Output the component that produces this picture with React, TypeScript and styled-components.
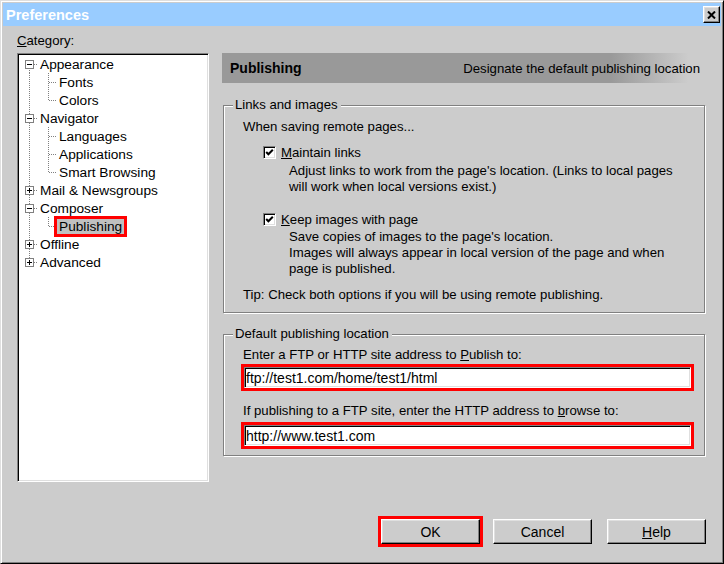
import React from "react";
import styled, { createGlobalStyle, css } from "styled-components";

const GlobalStyle = createGlobalStyle`
  html, body {
    margin: 0;
    padding: 0;
    background: #cccccc;
  }
  body {
    font-family: "Liberation Sans", Arial, sans-serif;
    font-size: 13.2px;
    color: #000;
  }
  * {
    box-sizing: border-box;
  }
`;

// 3D edges, classic style
const raised = css`
  border: 1px solid;
  border-color: #ffffff #000000 #000000 #ffffff;
  box-shadow: inset -1px -1px 0 #808080, inset 1px 1px 0 #dfdfdf;
`;

const sunken = css`
  border: 1px solid;
  border-color: #808080 #ffffff #ffffff #808080;
  box-shadow: inset 1px 1px 0 #000000, inset -1px -1px 0 #dfdfdf;
`;

const Window = styled.div`
  width: 724px;
  height: 564px;
  display: flex;
  flex-direction: column;
  background: #cccccc;
  border: 1px solid;
  border-color: #dfdfdf #000000 #000000 #dfdfdf;
  box-shadow: inset 1px 1px 0 #ffffff, inset -1px -1px 0 #808080;
  padding: 2px;
`;

const TitleBar = styled.div`
  height: 23px;
  display: flex;
  align-items: center;
  justify-content: space-between;
  padding: 0 1px 0 3px;
  background: #99ccff;
`;

const Title = styled.span`
  color: #ffffff;
  font-weight: bold;
  font-size: 14.5px;
`;

const CloseButton = styled.button`
  ${raised};
  width: 17px;
  height: 17px;
  padding: 0;
  background: #cccccc;
  display: flex;
  align-items: center;
  justify-content: center;
`;

const Body = styled.div`
  display: grid;
  grid-template-columns: 192px 486px;
  grid-template-rows: 16px 429px;
  column-gap: 13px;
  row-gap: 4px;
  padding: 7px 0 0 14px;
`;

const Label = styled.div`
  line-height: 16px;
  white-space: nowrap;
`;

const TreeBox = styled.div`
  ${sunken};
  background: #ffffff;
  padding: 1px 0 0 1px;
  grid-row: 2;
`;

const TreeRow = styled.div`
  height: 18px;
  display: flex;
  align-items: stretch;
  font-size: 13.7px;
`;

type Vert = "full" | "top" | "bottom" | "none";

const dotV = (x: number, v: Vert) => {
  if (v === "none") return "";
  const y = v === "bottom" ? 9 : 0;
  const h = v === "full" ? 18 : 9;
  return `repeating-linear-gradient(to bottom, #808080 0 1px, transparent 1px 2px) ${x}px ${y}px / 1px ${h}px no-repeat`;
};

const dotH = (x: number, w: number) =>
  `repeating-linear-gradient(to right, #808080 0 1px, transparent 1px 2px) ${x}px 9px / ${w}px 1px no-repeat`;

const Guide = styled.span<{ $x: number; $v: Vert; $stub?: [number, number] }>`
  width: 19px;
  flex: none;
  display: flex;
  align-items: flex-start;
  background: ${(p) =>
    [dotV(p.$x, p.$v), p.$stub ? dotH(p.$stub[0], p.$stub[1]) : ""]
      .filter(Boolean)
      .join(", ") || "none"};
`;

const Expander = styled.span<{ $open: boolean }>`
  width: 9px;
  height: 9px;
  margin: 5px 0 0 6px;
  border: 1px solid #808080;
  background: ${(p) =>
    p.$open
      ? "linear-gradient(#000, #000) 1px 3px / 5px 1px no-repeat, #ffffff"
      : "linear-gradient(#000, #000) 1px 3px / 5px 1px no-repeat, linear-gradient(#000, #000) 3px 1px / 1px 5px no-repeat, #ffffff"};
`;

const TreeLabel = styled.span<{ $selected?: boolean }>`
  align-self: center;
  line-height: 15px;
  padding: 0 2px;
  white-space: nowrap;
  ${(p) =>
    p.$selected &&
    css`
      background: #c0c0c0;
      outline: 3px solid #ff0000;
    `}
`;

const Panel = styled.div`
  grid-column: 2;
  grid-row: 2;
  display: flex;
  flex-direction: column;
`;

const Header = styled.div`
  height: 30px;
  display: flex;
  align-items: center;
  justify-content: space-between;
  padding: 0 8px;
  background: linear-gradient(to right, #999999 0%, #999999 80%, #cccccc 96%);
`;

const HeaderTitle = styled.span`
  font-weight: bold;
  font-size: 14px;
`;

const Group = styled.div<{ $top: number; $bottom: number }>`
  margin: ${(p) => p.$top}px 3px 0 1px;
  border: 1px solid #808080;
  box-shadow: 1px 1px 0 #ffffff, inset 1px 1px 0 #ffffff;
  padding: 0 10px ${(p) => p.$bottom}px 19px;
  display: flex;
  flex-direction: column;
`;

const GroupTitle = styled.div`
  align-self: flex-start;
  margin: -9px 0 0 -10px;
  padding: 0 3px 0 2px;
  line-height: 16px;
  background: #cccccc;
`;

const Line = styled.div<{ $top?: number; $indent?: number }>`
  margin-top: ${(p) => p.$top ?? 0}px;
  padding-left: ${(p) => p.$indent ?? 0}px;
  line-height: 16px;
  white-space: nowrap;
`;

const CheckRow = styled.label<{ $top: number }>`
  margin-top: ${(p) => p.$top}px;
  padding-left: 20px;
  height: 16px;
  display: flex;
  align-items: center;
  gap: 5px;
`;

const CheckBox = styled.span`
  ${sunken};
  width: 13px;
  height: 13px;
  background: #ffffff;
  display: flex;
  align-items: center;
  justify-content: center;
`;

const Field = styled.input<{ $top: number }>`
  ${sunken};
  margin: ${(p) => p.$top}px 0 0 1px;
  width: 447px;
  height: 21px;
  padding: 0 1px;
  font: inherit;
  font-size: 14px;
  color: #000;
  background: #ffffff;
  outline: 3px solid #ff0000;
`;

const Footer = styled.div`
  margin-top: 37px;
  display: flex;
  justify-content: flex-end;
  padding-right: 15px;
`;

const Button = styled.button<{ $marked?: boolean; $gap?: number }>`
  ${raised};
  width: 99px;
  height: 25px;
  margin-right: ${(p) => p.$gap ?? 0}px;
  padding: 0;
  background: #cccccc;
  color: #000;
  font: inherit;
  font-size: 14px;
  ${(p) =>
    p.$marked &&
    css`
      outline: 3px solid #ff0000;
    `}
`;

type Node = { label: string; open: boolean; children?: string[] };

const tree: Node[] = [
  { label: "Appearance", open: true, children: ["Fonts", "Colors"] },
  { label: "Navigator", open: true, children: ["Languages", "Applications", "Smart Browsing"] },
  { label: "Mail & Newsgroups", open: false },
  { label: "Composer", open: true, children: ["Publishing"] },
  { label: "Offline", open: false },
  { label: "Advanced", open: false },
];

const Check = () => (
  <svg width="9" height="9" viewBox="0 0 9 9">
    <path d="M1.2 4 L3.4 6.3 L7.8 1.8" stroke="#000" strokeWidth="2" fill="none" />
  </svg>
);

const CloseIcon = () => (
  <svg width="9" height="8" viewBox="0 0 9 8">
    <path d="M1 0.5 L8 7.5 M8 0.5 L1 7.5" stroke="#000" strokeWidth="2" fill="none" />
  </svg>
);

const Tree: React.FC = () => (
  <TreeBox>
    {tree.map((node, i) => {
      const rootV: Vert = i === 0 ? "bottom" : i === tree.length - 1 ? "top" : "full";
      return (
        <React.Fragment key={node.label}>
          <TreeRow>
            <Guide $x={10} $v={rootV} $stub={[15, 4]}>
              <Expander $open={node.open} />
            </Guide>
            <TreeLabel>{node.label}</TreeLabel>
          </TreeRow>
          {node.open &&
            node.children?.map((child, j) => (
              <TreeRow key={child}>
                <Guide $x={10} $v="full" />
                <Guide
                  $x={10}
                  $v={j === node.children!.length - 1 ? "top" : "full"}
                  $stub={[11, 8]}
                />
                <TreeLabel $selected={child === "Publishing"}>{child}</TreeLabel>
              </TreeRow>
            ))}
        </React.Fragment>
      );
    })}
  </TreeBox>
);

const App: React.FC = () => {
  return (
    <>
      <GlobalStyle />
      <Window>
        <TitleBar>
          <Title>Preferences</Title>
          <CloseButton aria-label="Close">
            <CloseIcon />
          </CloseButton>
        </TitleBar>

        <Body>
          <Label>
            <u>C</u>ategory:
          </Label>
          <Tree />

          <Panel>
            <Header>
              <HeaderTitle>Publishing</HeaderTitle>
              <span>Designate the default publishing location</span>
            </Header>

            <Group $top={22} $bottom={9}>
              <GroupTitle>Links and images</GroupTitle>
              <Line $top={6}>When saving remote pages...</Line>
              <CheckRow $top={9}>
                <CheckBox>
                  <Check />
                </CheckBox>
                <span>
                  <u>M</u>aintain links
                </span>
              </CheckRow>
              <Line $top={3} $indent={46}>
                Adjust links to work from the page's location. (Links to local pages
                <br />
                will work when local versions exist.)
              </Line>
              <CheckRow $top={16}>
                <CheckBox>
                  <Check />
                </CheckBox>
                <span>
                  <u>K</u>eep images with page
                </span>
              </CheckRow>
              <Line $top={2} $indent={46}>
                Save copies of images to the page's location.
                <br />
                Images will always appear in local version of the page and when
                <br />
                page is published.
              </Line>
              <Line $top={10}>Tip: Check both options if you will be using remote publishing.</Line>
            </Group>

            <Group $top={21} $bottom={9}>
              <GroupTitle>Default publishing location</GroupTitle>
              <Line $top={5}>
                Enter a FTP or HTTP site address to <u>P</u>ublish to:
              </Line>
              <Field $top={4} readOnly value="ftp://test1.com/home/test1/html" />
              <Line $top={15}>
                If publishing to a FTP site, enter the HTTP address to <u>b</u>rowse to:
              </Line>
              <Field $top={6} readOnly value="http://www.test1.com" />
            </Group>
          </Panel>
        </Body>

        <Footer>
          <Button $marked $gap={13}>
            OK
          </Button>
          <Button $gap={15}>Cancel</Button>
          <Button>
            <u>H</u>elp
          </Button>
        </Footer>
      </Window>
    </>
  );
};

export default App;
